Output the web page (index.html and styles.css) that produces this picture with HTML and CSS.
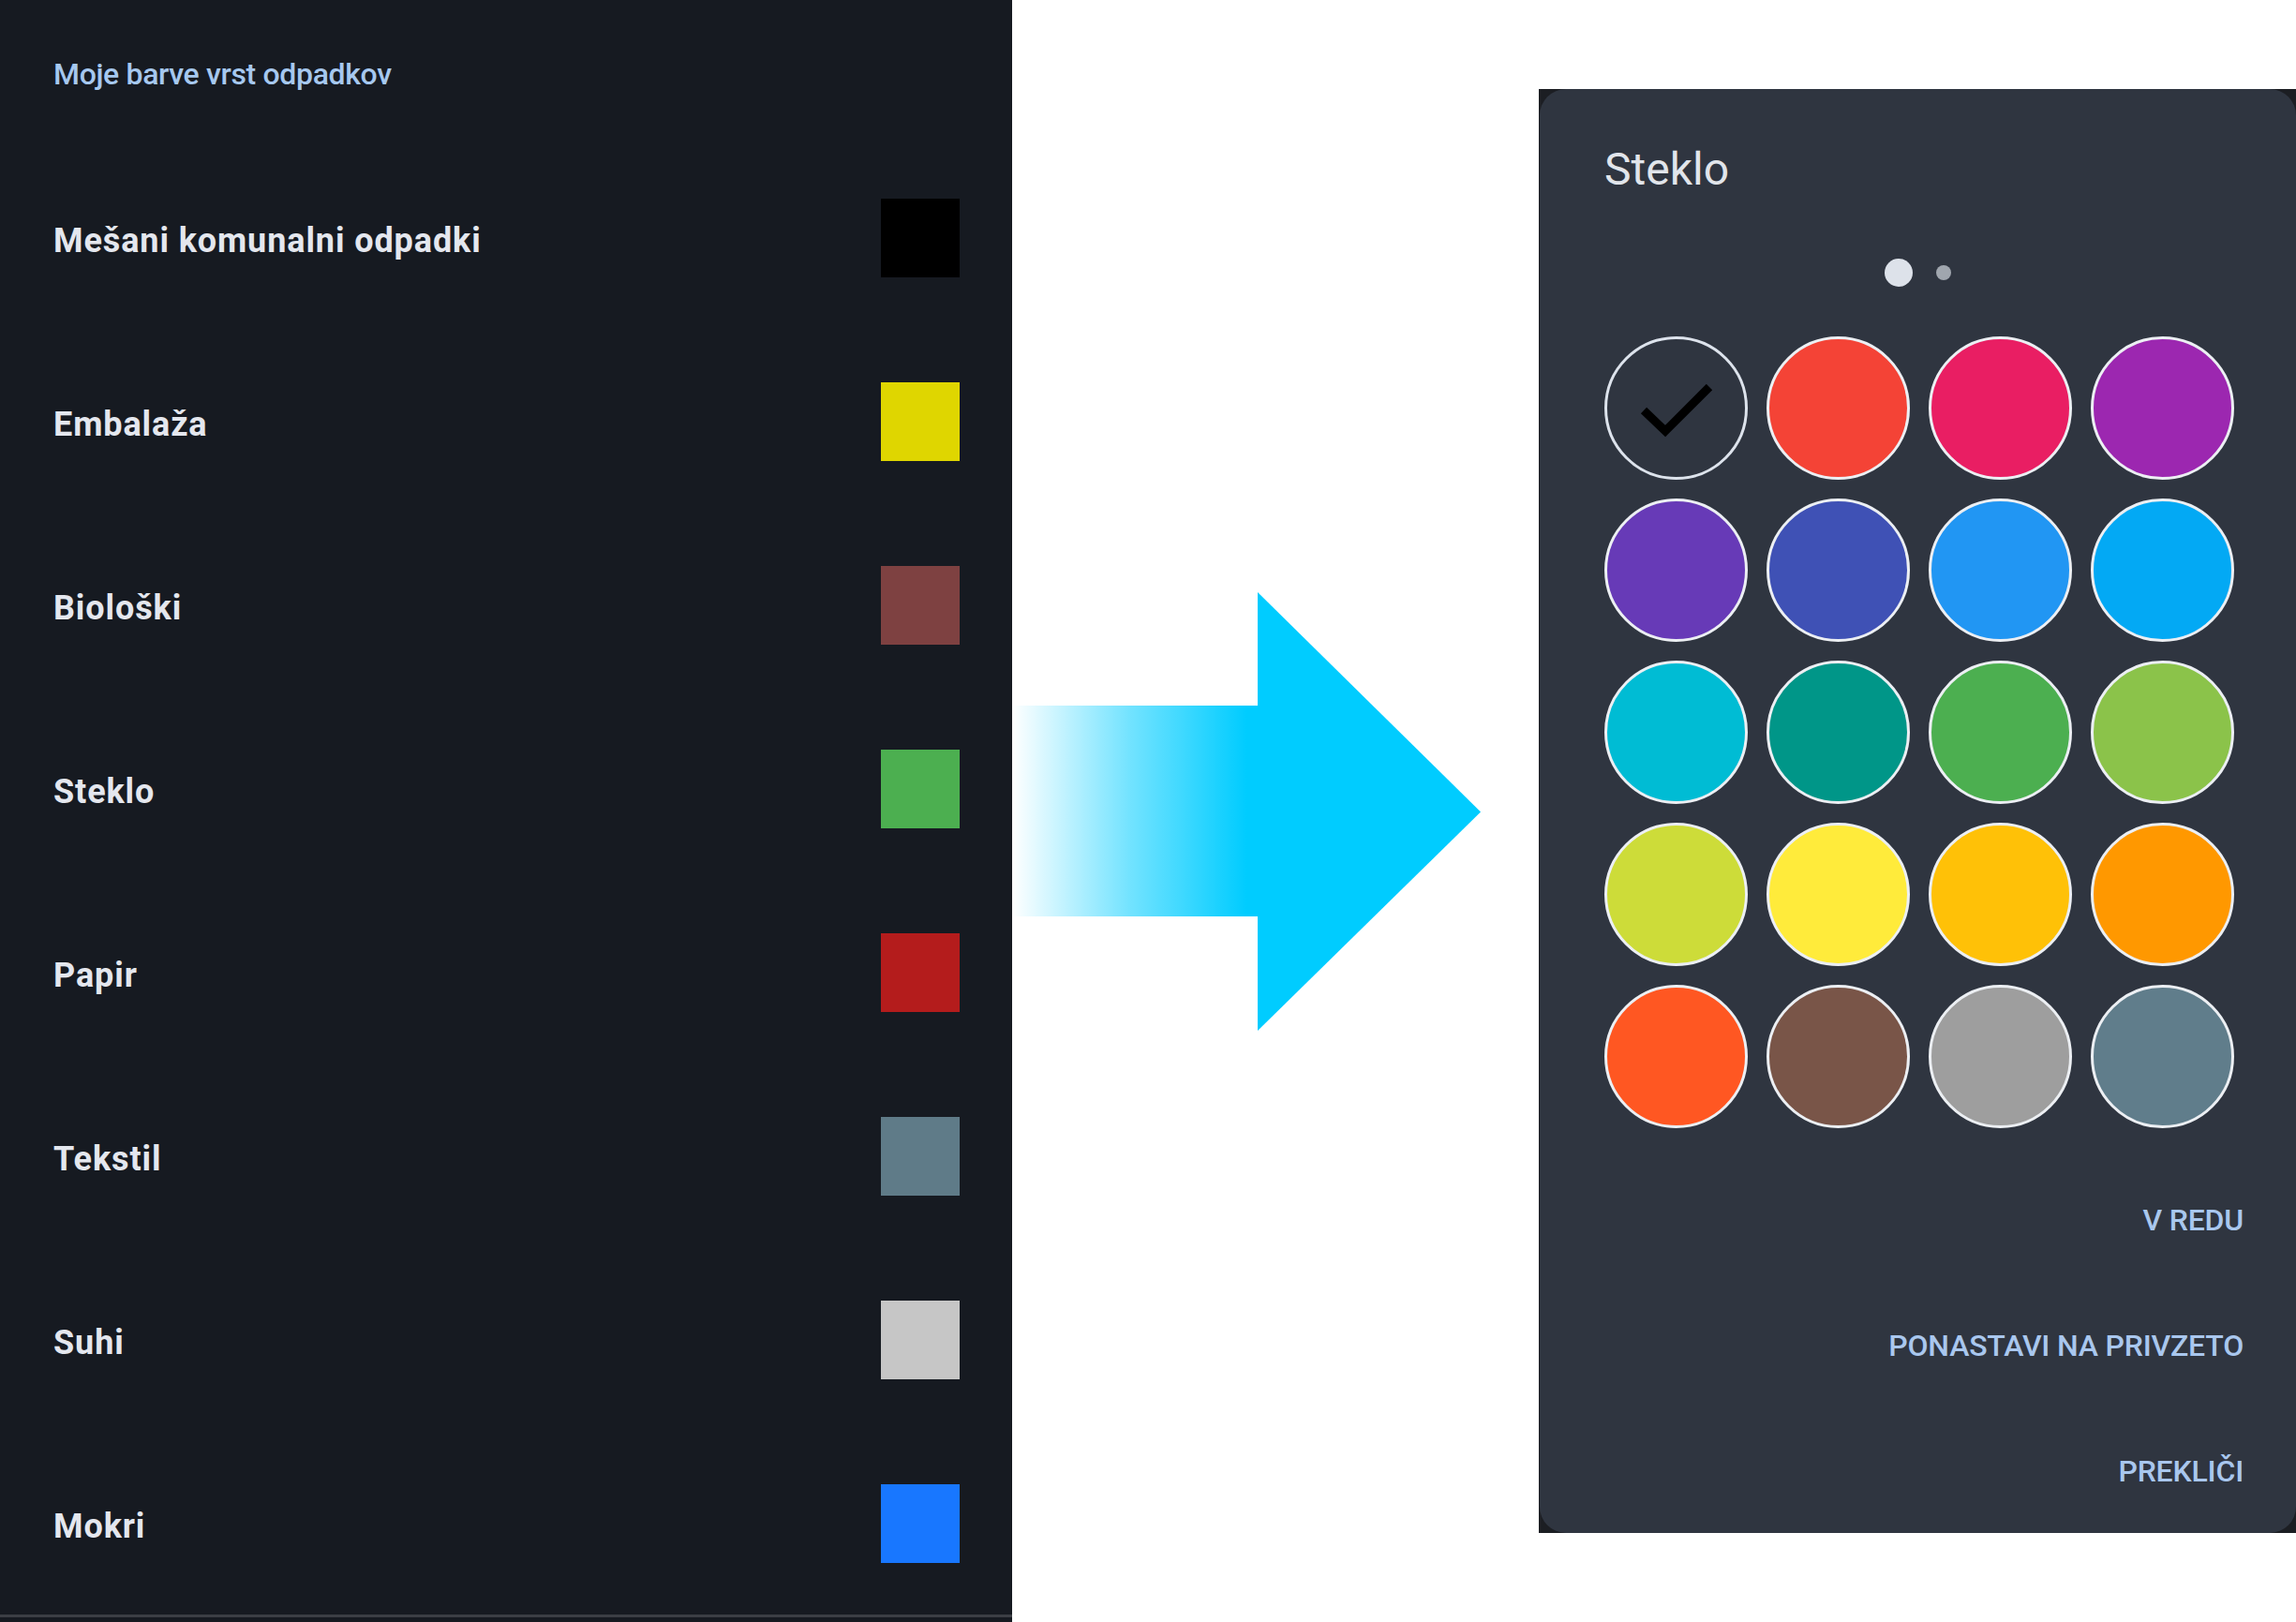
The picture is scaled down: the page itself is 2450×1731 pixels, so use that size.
FILE: index.html
```html
<!DOCTYPE html>
<html lang="sl">
<head>
<meta charset="utf-8">
<title>Moje barve vrst odpadkov</title>
<link rel="stylesheet" href="styles.css">
</head>
<body>
<div class="page">
  <section class="settings">
    <h2 class="settings-title">Moje barve vrst odpadkov</h2>
    <ul class="waste-list">
      <li class="waste-row"><span class="waste-name">Mešani komunalni odpadki</span><span class="swatch sw-black"></span></li>
      <li class="waste-row"><span class="waste-name">Embalaža</span><span class="swatch sw-yellow"></span></li>
      <li class="waste-row"><span class="waste-name">Biološki</span><span class="swatch sw-brown"></span></li>
      <li class="waste-row"><span class="waste-name">Steklo</span><span class="swatch sw-green"></span></li>
      <li class="waste-row"><span class="waste-name">Papir</span><span class="swatch sw-red"></span></li>
      <li class="waste-row"><span class="waste-name">Tekstil</span><span class="swatch sw-slate"></span></li>
      <li class="waste-row"><span class="waste-name">Suhi</span><span class="swatch sw-grey"></span></li>
      <li class="waste-row"><span class="waste-name">Mokri</span><span class="swatch sw-blue"></span></li>
    </ul>
    <div class="settings-divider"></div>
  </section>

  <div class="arrow-col">
    <svg class="arrow" width="500" height="468" viewBox="0 0 500 468" aria-hidden="true">
      <defs>
        <linearGradient id="fade" gradientUnits="userSpaceOnUse" x1="0" y1="0" x2="250" y2="0">
          <stop offset="0" stop-color="#00ccff" stop-opacity="0"/>
          <stop offset="0.5" stop-color="#00ccff" stop-opacity="0.55"/>
          <stop offset="1" stop-color="#00ccff" stop-opacity="1"/>
        </linearGradient>
      </defs>
      <rect x="0" y="121" width="264" height="225" fill="url(#fade)"/>
      <polygon points="262,0 500,234.5 262,468" fill="#00ccff"/>
    </svg>
  </div>

  <div class="dialog-col">
    <div class="dialog-frame">
      <div class="dialog">
        <h3 class="dialog-title">Steklo</h3>
        <div class="pager">
          <span class="dot dot-active"></span>
          <span class="dot"></span>
        </div>
        <div class="palette">
          <div class="color-circle selected">
            <svg class="check" width="100" height="80" viewBox="0 0 100 80" aria-hidden="true">
              <polyline points="15,28 38,50 85,3" fill="none" stroke="#000" stroke-width="9"/>
            </svg>
          </div>
          <div class="color-circle c-red"></div>
          <div class="color-circle c-pink"></div>
          <div class="color-circle c-purple"></div>
          <div class="color-circle c-deeppurple"></div>
          <div class="color-circle c-indigo"></div>
          <div class="color-circle c-blue"></div>
          <div class="color-circle c-lightblue"></div>
          <div class="color-circle c-cyan"></div>
          <div class="color-circle c-teal"></div>
          <div class="color-circle c-green"></div>
          <div class="color-circle c-lightgreen"></div>
          <div class="color-circle c-lime"></div>
          <div class="color-circle c-yellow"></div>
          <div class="color-circle c-amber"></div>
          <div class="color-circle c-orange"></div>
          <div class="color-circle c-deeporange"></div>
          <div class="color-circle c-brown"></div>
          <div class="color-circle c-grey"></div>
          <div class="color-circle c-bluegrey"></div>
        </div>
        <div class="actions">
          <span class="action">V REDU</span>
          <span class="action">PONASTAVI NA PRIVZETO</span>
          <span class="action">PREKLIČI</span>
        </div>
      </div>
    </div>
  </div>
</div>
</body>
</html>
```

FILE: styles.css
```css
* { box-sizing: border-box; }

html, body {
  margin: 0;
  padding: 0;
  background: #ffffff;
  font-family: Roboto, "Liberation Sans", sans-serif;
}

.page {
  display: flex;
  width: 2450px;
  height: 1731px;
  overflow: hidden;
}

/* ---------- left settings panel ---------- */
.settings {
  width: 1080px;
  height: 1731px;
  flex: none;
  background: #161a21;
  display: flex;
  flex-direction: column;
}

.settings-title {
  margin: 59px 0 0 57px;
  font-size: 32px;
  line-height: 40px;
  font-weight: 500;
  color: #a6c8ef;
  letter-spacing: -0.35px;
}

.waste-list {
  list-style: none;
  margin: 57px 0 0 0;
  padding: 0 56px 0 57px;
}

.waste-row {
  height: 196px;
  display: flex;
  align-items: center;
  justify-content: space-between;
}

.waste-name {
  font-size: 36px;
  font-weight: 700;
  color: #e4e7ee;
  letter-spacing: 0.9px;
  padding-top: 5px;
}

.swatch {
  width: 84px;
  height: 84px;
  flex: none;
}
.sw-black  { background: #000000; }
.sw-yellow { background: #dfd600; }
.sw-brown  { background: #7e4141; }
.sw-green  { background: #4caf50; }
.sw-red    { background: #b41c1c; }
.sw-slate  { background: #5f7b88; }
.sw-grey   { background: #c6c6c6; }
.sw-blue   { background: #1877ff; }

.settings-divider {
  margin-top: -1px;
  height: 3px;
  background: #3b3e44;
}

/* ---------- arrow ---------- */
.arrow-col {
  width: 562px;
  flex: none;
  display: flex;
  align-items: center;
}

.arrow { display: block; }

/* ---------- dialog ---------- */
.dialog-col {
  width: 808px;
  flex: none;
  padding-top: 95px;
}

.dialog-frame {
  background: #1c1e23;
  padding-left: 1px;
}

.dialog {
  background: #2f3540;
  border-radius: 28px;
  padding: 58px 56px 46px 69px;
  display: flex;
  flex-direction: column;
}

.dialog-title {
  margin: 0;
  font-size: 48px;
  line-height: 56px;
  font-weight: 400;
  color: #e1e5eb;
}

.pager {
  margin-top: 67px;
  height: 30px;
  display: flex;
  align-items: center;
  justify-content: center;
  gap: 25px;
  margin-left: -14px;
}

.dot {
  width: 16px;
  height: 16px;
  border-radius: 50%;
  background: #a0a6ae;
}
.dot-active {
  width: 30px;
  height: 30px;
  background: #dde2ea;
}

.palette {
  margin-top: 53px;
  display: grid;
  grid-template-columns: repeat(4, 153px);
  grid-auto-rows: 153px;
  gap: 20px;
}

.color-circle {
  border-radius: 50%;
  border: 3px solid #eceff3;
  display: flex;
  align-items: center;
  justify-content: center;
}
.color-circle.selected { background: transparent; border-color: #dde3ec; }
.check { display: block; margin-top: 28px; }

.c-red        { background: #f44336; }
.c-pink       { background: #e91e63; }
.c-purple     { background: #9c27b0; }
.c-deeppurple { background: #673ab7; }
.c-indigo     { background: #3f51b5; }
.c-blue       { background: #2196f3; }
.c-lightblue  { background: #03a9f4; }
.c-cyan       { background: #00bcd4; }
.c-teal       { background: #009688; }
.c-green      { background: #4caf50; }
.c-lightgreen { background: #8bc34a; }
.c-lime       { background: #cddc39; }
.c-yellow     { background: #ffeb3b; }
.c-amber      { background: #ffc107; }
.c-orange     { background: #ff9800; }
.c-deeporange { background: #ff5722; }
.c-brown      { background: #795548; }
.c-grey       { background: #9e9e9e; }
.c-bluegrey   { background: #607d8b; }

.actions {
  margin-top: 78px;
  display: flex;
  flex-direction: column;
  align-items: flex-end;
  gap: 94px;
}

.action {
  font-size: 32px;
  line-height: 40px;
  font-weight: 500;
  color: #a9c7ee;
  letter-spacing: -0.2px;
}
```
